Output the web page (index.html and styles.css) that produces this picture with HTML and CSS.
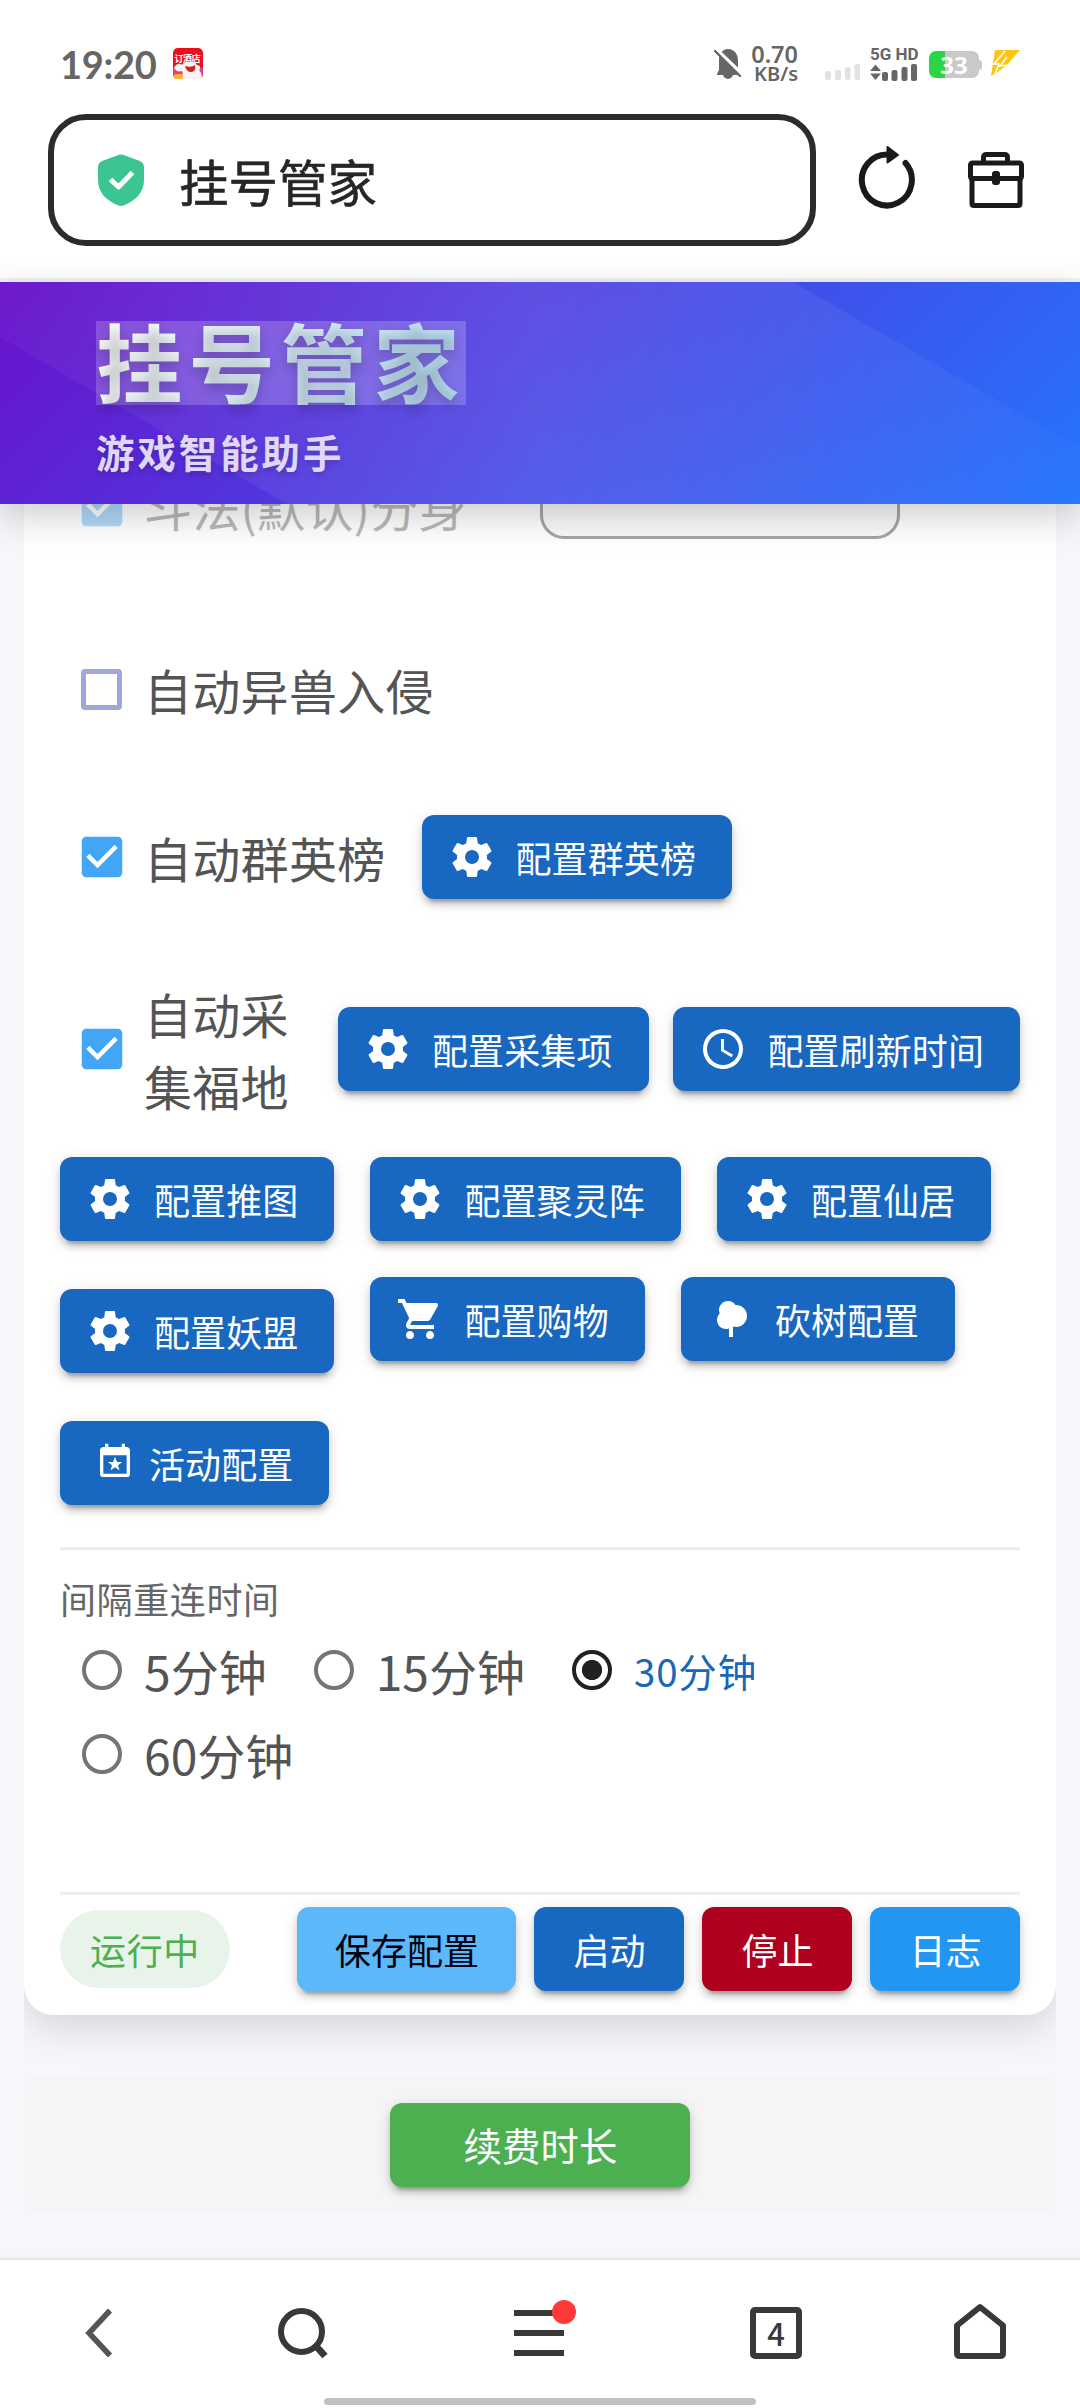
FILE: index.html
```html
<!DOCTYPE html>
<html lang="zh-CN">
<head>
<meta charset="utf-8">
<title>挂号管家</title>
<link rel="stylesheet" href="styles.css">
</head>
<body>
<svg class="defs" width="0" height="0">
  <symbol id="cog" viewBox="0 0 24 24"><path d="M12,15.5A3.5,3.5 0 0,1 8.5,12A3.5,3.5 0 0,1 12,8.5A3.5,3.5 0 0,1 15.5,12A3.5,3.5 0 0,1 12,15.5M19.43,12.97C19.47,12.65 19.5,12.33 19.5,12C19.5,11.67 19.47,11.34 19.43,11L21.54,9.37C21.73,9.22 21.78,8.95 21.66,8.73L19.66,5.27C19.54,5.05 19.27,4.96 19.05,5.05L16.56,6.05C16.04,5.66 15.5,5.32 14.87,5.07L14.5,2.42C14.46,2.18 14.25,2 14,2H10C9.75,2 9.54,2.18 9.5,2.42L9.13,5.07C8.5,5.32 7.96,5.66 7.44,6.05L4.95,5.05C4.73,4.96 4.46,5.05 4.34,5.27L2.34,8.73C2.21,8.95 2.27,9.22 2.46,9.37L4.57,11C4.53,11.34 4.5,11.67 4.5,12C4.5,12.33 4.53,12.65 4.57,12.97L2.46,14.63C2.27,14.78 2.21,15.05 2.34,15.27L4.34,18.73C4.46,18.95 4.73,19.03 4.95,18.95L7.44,17.94C7.96,18.34 8.5,18.68 9.13,18.93L9.5,21.58C9.54,21.82 9.75,22 10,22H14C14.25,22 14.46,21.82 14.5,21.58L14.87,18.93C15.5,18.67 16.04,18.34 16.56,17.94L19.05,18.95C19.27,19.03 19.54,18.95 19.66,18.73L21.66,15.27C21.78,15.05 21.73,14.78 21.54,14.63L19.43,12.97Z"/></symbol>
  <symbol id="clock" viewBox="0 0 24 24"><path d="M12,20A8,8 0 0,0 20,12A8,8 0 0,0 12,4A8,8 0 0,0 4,12A8,8 0 0,0 12,20M12,2A10,10 0 0,1 22,12A10,10 0 0,1 12,22C6.47,22 2,17.5 2,12A10,10 0 0,1 12,2M12.5,7V12.25L17,14.92L16.25,16.15L11,13V7H12.5Z"/></symbol>
  <symbol id="cart" viewBox="0 0 24 24"><path d="M17,18C15.89,18 15,18.89 15,20A2,2 0 0,0 17,22A2,2 0 0,0 19,20C19,18.89 18.1,18 17,18M1,2V4H3L6.6,11.59L5.24,14.04C5.09,14.32 5,14.65 5,15A2,2 0 0,0 7,17H19V15H7.42A0.25,0.25 0 0,1 7.17,14.75C7.17,14.7 7.18,14.66 7.2,14.63L8.1,13H15.55C16.3,13 16.96,12.58 17.3,11.97L20.88,5.5C20.95,5.34 21,5.17 21,5A1,1 0 0,0 20,4H5.21L4.27,2M7,18C5.89,18 5,18.89 5,20A2,2 0 0,0 7,22A2,2 0 0,0 9,20C9,18.89 8.1,18 7,18Z"/></symbol>
  <symbol id="tree" viewBox="0 0 24 24"><path d="M11,21V16.74C10.53,16.91 10.03,17 9.5,17C7,17 5,15 5,12.5C5,11.23 5.5,10.09 6.36,9.27C6.13,8.73 6,8.13 6,7.5C6,5 8,3 10.5,3C12.06,3 13.44,3.8 14.25,5C14.33,5 14.41,5 14.5,5A5.5,5.5 0 0,1 20,10.5A5.5,5.5 0 0,1 14.5,16C14,16 13.5,15.93 13,15.79V21H11Z"/></symbol>
  <symbol id="calendar-star" viewBox="0 0 24 24"><path d="M19,19H5V8H19M19,3H18V1H16V3H8V1H6V3H5C3.89,3 3,3.89 3,5V19A2,2 0 0,0 5,21H19A2,2 0 0,0 21,19V5C21,3.89 20.1,3 19,3Z"/><path d="M12,8.9L13.15,12H16.3L13.8,13.9L14.7,17.1L12,15.2L9.3,17.1L10.2,13.9L7.7,12H10.85Z"/></symbol>
  <symbol id="checked" viewBox="0 0 24 24"><path d="M10,17L5,12L6.41,10.58L10,14.17L17.59,6.58L19,8M19,3H5C3.89,3 3,3.89 3,5V19A2,2 0 0,0 5,21H19A2,2 0 0,0 21,19V5C21,3.89 20.1,3 19,3Z"/></symbol>
</svg>

<div class="screen">
  <div class="statusbar">
    <span class="time">19:20</span>
    <svg class="app-icon" width="30" height="31" viewBox="0 0 30 31">
      <rect width="30" height="31" rx="5" fill="#e8101c"/>
      <path d="M0 20H30V26a5 5 0 0 1-5 5H5a5 5 0 0 1-5-5Z" fill="#e0407c"/>
      <text x="1.5" y="14" class="app-text" textLength="26">订酒店</text>
      <path d="M1 20C3 15 7 15 9 17C11 13 21 12 24 17C28 17 28 21 26 22C29 25 29 28 29 31H8C10 27 10 25 9 23C5 24 3 23 1 20Z" fill="#fbf3f3"/>
      <path d="M12 18C16 19 20 19 22 17C23 22 21 24 18 24C15 24 13 22 12 18Z" fill="#c22a22"/>
      <rect x="1" y="26" width="9" height="5" rx="2" fill="#f9b233"/>
    </svg>
    <svg class="bell" width="28" height="32" viewBox="0 0 28 32">
      <path d="M3 26L5 22V12C5 6 8 1 14 1C20 1 24 6 24 12V27H3Z" fill="#666"/>
      <path d="M9 26A5 5 0 0 0 19 26Z" fill="#666"/>
      <path d="M0 -1L29 27" stroke="#fff" stroke-width="3.5"/>
      <path d="M1 3L26 28" stroke="#666" stroke-width="2.4" stroke-linecap="round"/>
    </svg>
    <div class="speed"><span class="rate">0.70</span><span class="unit">KB/s</span></div>
    <svg class="signal" width="36" height="18" viewBox="0 0 36 18" fill="#e2e2e2">
      <rect x="0" y="8" width="6" height="9" rx="2"/><rect x="10" y="7" width="6" height="10" rx="2"/><rect x="20" y="4" width="5.5" height="13" rx="2"/><rect x="29.500" y="1" width="5.5" height="16" rx="2"/>
    </svg>
    <div class="network">
      <span class="net-type">5G HD</span>
      <svg width="48" height="17" viewBox="0 0 48 17" fill="#666">
        <path d="M0 7L5.500 0.500L11 7ZM0 9.500H11L5.500 16Z"/>
        <rect x="12" y="8" width="6" height="9" rx="2"/><rect x="21.500" y="6" width="6" height="11" rx="2"/><rect x="31.500" y="3" width="6" height="14" rx="2"/><rect x="41" y="0" width="6" height="17" rx="2"/>
      </svg>
    </div>
    <div class="battery">33</div>
    <svg class="bolt" width="30" height="26" viewBox="0 0 30 26">
      <path d="M5 0H30L18 14H20L1 26L5 0Z" fill="#fcc612"/>
      <path d="M15 1L4 14M2 14H9L5 24M17 7L10 16L18 15L8 23" stroke="#fff" stroke-width="1.500" fill="none"/>
    </svg>
  </div>

  <div class="addressbar">
    <div class="address">
      <svg width="46" height="52" viewBox="0 0 46 52">
        <path d="M19 1.500Q23-.5 27 1.500L42 7Q46 9 46 13V26C46 39 37 47 26 51.300Q23 52.500 20 51.300C9 47 0 39 0 26V13Q0 9 4 7Z" fill="#3cc591"/>
        <path d="M12.500 25.500L20.500 33L34.500 18.500" stroke="#fff" stroke-width="5" fill="none" stroke-linejoin="round"/>
      </svg>
      <span>挂号管家</span>
    </div>
    <svg class="reload" width="60" height="66" viewBox="0 0 60 66">
      <path d="M30 8.500A25 25.500 0 1 0 47.500 17" fill="none" stroke="#1a1a1a" stroke-width="6" stroke-linecap="round"/>
      <path d="M29.500 1V16.500L40 9Z" fill="#1a1a1a" stroke="#1a1a1a" stroke-width="2" stroke-linejoin="round"/>
    </svg>
    <svg class="toolbox" width="58" height="58" viewBox="0 0 58 58" fill="none" stroke="#1a1a1a" stroke-width="5" stroke-linejoin="round">
      <path d="M16.500 11V6.500Q16.500 3.500 19.500 3.500H37.500Q40.500 3.500 40.500 6.500V11"/>
      <rect x="3.500" y="12" width="51" height="15.500" rx="2"/>
      <path d="M5 27V52.500Q5 54.500 7 54.500H51Q53 54.500 53 52.500V27"/>
      <rect x="25" y="20" width="8" height="14" rx="3" fill="#1a1a1a" stroke="none"/>
    </svg>
  </div>

  <header class="banner">
    <h1>挂号管家</h1>
    <p>游戏智能助手</p>
  </header>

  <main class="content">
    <div class="card-clip">
      <section class="card">
        <div class="row row-top">
          <svg class="check faded"><use href="#checked"/></svg>
          <span class="label disabled">斗法(默认)分身</span>
          <span class="field"></span>
        </div>
        <div class="row row-beast">
          <span class="box"></span>
          <span class="label">自动异兽入侵</span>
        </div>
        <div class="row row-rank">
          <svg class="check"><use href="#checked"/></svg>
          <span class="label">自动群英榜</span>
          <button class="btn"><svg><use href="#cog"/></svg>配置群英榜</button>
        </div>
        <div class="row row-gather">
          <svg class="check"><use href="#checked"/></svg>
          <span class="label wrap">自动采集福地</span>
          <button class="btn"><svg><use href="#cog"/></svg>配置采集项</button>
          <button class="btn"><svg><use href="#clock"/></svg>配置刷新时间</button>
        </div>

        <div class="configs">
          <div class="stack">
            <button class="btn"><svg><use href="#cog"/></svg>配置推图</button>
            <button class="btn"><svg><use href="#cog"/></svg>配置妖盟</button>
            <button class="btn event"><svg><use href="#calendar-star"/></svg>活动配置</button>
          </div>
          <div class="flow">
            <button class="btn"><svg><use href="#cog"/></svg>配置聚灵阵</button>
            <button class="btn"><svg><use href="#cog"/></svg>配置仙居</button>
            <button class="btn"><svg><use href="#cart"/></svg>配置购物</button>
            <button class="btn"><svg><use href="#tree"/></svg>砍树配置</button>
          </div>
        </div>

        <hr>
        <div class="caption">间隔重连时间</div>
        <div class="radios">
          <label><i></i>5分钟</label>
          <label><i></i>15分钟</label>
          <label class="on"><i></i>30分钟</label>
          <label><i></i>60分钟</label>
        </div>
        <hr class="last">
        <div class="actions">
          <span class="pill">运行中</span>
          <button class="btn save">保存配置</button>
          <button class="btn">启动</button>
          <button class="btn stop">停止</button>
          <button class="btn log">日志</button>
        </div>
      </section>
    </div>
    <div class="renew"><button class="btn">续费时长</button></div>
  </main>

  <nav class="navbar">
    <div class="tabs">
      <svg width="60" height="60" viewBox="0 0 60 60"><path d="M41 7.500L20 30L41 52.500" fill="none" stroke="#555" stroke-width="5.500"/></svg>
      <svg width="60" height="60" viewBox="0 0 60 60" fill="none" stroke="#383838"><circle cx="29.500" cy="28.500" r="20.500" stroke-width="6"/><path d="M43 42L53 53" stroke-width="7"/></svg>
      <svg width="80" height="70" viewBox="0 0 80 70"><path d="M15 15H65M15 35H65M15 55H65" stroke="#383838" stroke-width="6"/><circle cx="65" cy="14" r="12" fill="#ff3838"/></svg>
      <div class="count">4</div>
      <svg width="60" height="70" viewBox="0 0 60 70"><path d="M30 9L53 27.500V55Q53 58 50 58H10Q7 58 7 55V27.500Z" fill="none" stroke="#383838" stroke-width="6" stroke-linejoin="round"/></svg>
    </div>
    <div class="home-indicator"></div>
  </nav>
</div>
</body>
</html>
```
FILE: styles.css
```css
* { box-sizing: border-box; }
body { margin: 0; font-family: "Noto Sans CJK SC", sans-serif; }
.defs { position: absolute; }
.screen {
  width: 1080px;
  height: 2408px;
  display: flex;
  flex-direction: column;
  overflow: hidden;
  background: #f5f7fb;
}

/* system status bar */
.statusbar {
  height: 96px;
  flex: none;
  padding: 31px 60px 0;
  display: flex;
  align-items: center;
  background: #fff;
  color: #666;
}
.time {
  font: 700 38px/48px "Lato", sans-serif;
  width: 113px;
  letter-spacing: -0.3px;
}
.app-text { font-size: 9px; font-weight: 700; fill: #fff; }
.bell { margin-left: 511px; }
.speed {
  width: 50px;
  margin-left: 6px;
  display: flex;
  flex-direction: column;
  align-items: flex-end;
  font-family: "Noto Sans", sans-serif;
  font-weight: 600;
}
.rate { font-size: 23.500px; line-height: 20px; }
.unit { font-size: 20px; line-height: 19px; }
.signal { margin: 16px 0 0 27px; }
.network { margin-left: 9px; width: 48px; display: flex; flex-direction: column; gap: 2px; }
.network svg { display: block; }
.net-type { font: 700 17px/15px "Roboto", sans-serif; white-space: nowrap; }
.battery {
  position: relative;
  width: 50px;
  height: 27px;
  margin: 2px 0 0 11px;
  border-radius: 7px;
  background: linear-gradient(90deg, #2ad643 16px, #c9c9c9 16px);
  color: #fff;
  font: 700 24px/27px "Open Sans", sans-serif;
  text-align: center;
}
.battery::after {
  content: "";
  position: absolute;
  left: 50px;
  top: 9px;
  width: 3px;
  height: 10px;
  border-radius: 0 3px 3px 0;
  background: #c9c9c9;
}
.bolt { margin: -1px 0 0 11px; }

/* browser address bar */
.addressbar {
  height: 186px;
  flex: none;
  padding: 18px 0 32px 48px;
  display: flex;
  align-items: center;
  background: #fff;
  border-bottom: 4px solid #f1f2f6;
}
.address {
  width: 768px;
  height: 132px;
  border: 6px solid #2b2b2b;
  border-radius: 38px;
  padding-left: 44px;
  display: flex;
  align-items: center;
  gap: 35px;
  color: #262626;
  font-size: 49.500px;
  -webkit-text-stroke: .6px #262626;
}
.reload { margin: 0 0 2px 42px; }
.toolbox { margin-left: 49px; }

/* app banner */
.banner {
  position: relative;
  z-index: 1;
  height: 222px;
  flex: none;
  padding: 39px 96px 0;
  background: linear-gradient(135deg, #6a11cb 0%, #2575fc 100%);
  box-shadow: 0 12px 36px rgba(0, 0, 0, .2);
}
.banner::before {
  content: "";
  position: absolute;
  inset: 0;
  background: linear-gradient(90deg, rgba(255, 255, 255, .03), rgba(255, 255, 255, .1) 50%, rgba(255, 255, 255, .02));
  clip-path: polygon(0 0, 793px 0, 1080px 166px, 1080px 222px, 287px 222px, 0 55px);
}
.banner h1 {
  position: relative;
  margin: 0;
  width: 370px;
  height: 84px;
  font-size: 86.400px;
  line-height: 78px;
  letter-spacing: 6px;
  font-weight: 700;
  white-space: nowrap;
  color: transparent;
  background:
    linear-gradient(100deg, #fff, #b5dcf4) text,
    rgba(255, 255, 255, .2);
  text-shadow: 0 6px 12px rgba(0, 0, 0, .2);
}
.banner p {
  position: relative;
  margin: 22px 0 0;
  font-size: 38.400px;
  line-height: 48px;
  letter-spacing: 3px;
  font-weight: 700;
  color: #dfd6f8;
  text-shadow: 0 3px 6px rgba(0, 0, 0, .2);
}

/* page */
.content { flex: 1; min-height: 0; }
.card-clip {
  margin: 0 24px;
  height: 1572px;
  overflow: hidden;
}
.card {
  height: 1511px;
  display: flow-root;
  padding: 0 36px;
  background: #fff;
  border-radius: 0 0 30px 30px;
  box-shadow: 0 12px 42px rgba(0, 0, 0, .14);
}
.row { height: 84px; display: flex; align-items: center; }
.row-top { height: 66px; margin-top: -31px; }
.row-beast { margin-top: 108px; }
.row-rank { margin-top: 84px; }
.row-gather { height: 144px; margin-top: 78px; }
.check { width: 54px; height: 54px; margin: 0 15px; flex: none; fill: #42a5f5; }
.faded { opacity: .42; }
.box {
  width: 41px;
  height: 41px;
  margin: 0 22px 0 21px;
  border: 5px solid #9fa8da;
  border-radius: 4px;
}
.label { font-size: 48px; line-height: 72px; letter-spacing: .3px; color: #545454; white-space: nowrap; }
.disabled { color: #b9b9b9; }
.wrap { width: 156px; padding-right: 10px; white-space: normal; }
.field {
  width: 360px;
  height: 66px;
  margin-left: auto;
  margin-right: 120px;
  border: 3px solid #a6a6a6;
  border-top: 0;
  border-radius: 0 0 24px 24px;
  background: rgba(0, 0, 0, .02);
}
.btn {
  height: 84px;
  flex: none;
  margin: 0;
  padding: 0 36px 0 26px;
  display: flex;
  align-items: center;
  justify-content: center;
  border: 0;
  border-radius: 12px;
  background: #1867c0;
  color: #fff;
  font: 400 36px "Noto Sans CJK SC", sans-serif;
  letter-spacing: .1px;
  white-space: nowrap;
  box-shadow: 0 9px 3px -6px rgba(0, 0, 0, .2), 0 6px 6px rgba(0, 0, 0, .14), 0 3px 15px rgba(0, 0, 0, .12);
}
.btn svg { width: 48px; height: 48px; margin-right: 20px; fill: currentColor; }
.row-rank .btn { margin-left: 36px; }
.wrap + .btn { margin-left: 38px; }
.row-gather .btn + .btn { margin-left: auto; }

.configs { display: flex; gap: 36px; margin-top: 36px; }
.stack { display: flex; flex-direction: column; align-items: flex-start; gap: 48px; }
.flow { display: flex; flex-wrap: wrap; align-content: flex-start; gap: 36px; }
.event { padding: 0 36px 0 35px; }
.event svg { width: 40px; height: 40px; margin: -3px 14px 0 0; }

hr { height: 3px; margin: 42px 0 24px; border: 0; background: #eee; }
.caption { font-size: 36px; line-height: 48px; letter-spacing: .6px; color: #666; }
.radios { display: flex; flex-wrap: wrap; column-gap: 25px; margin-top: 6px; }
.radios label {
  height: 84px;
  display: flex;
  align-items: center;
  font-size: 48px;
  color: #545454;
}
.radios i {
  width: 40px;
  height: 40px;
  margin: 0 22px;
  border: 4px solid #757575;
  border-radius: 50%;
}
.radios .on { font-size: 38.400px; letter-spacing: .9px; color: #1867b8; margin-right: 100px; }
.on i { border-color: #212121; background: radial-gradient(circle, #212121 9.700px, transparent 10.500px); }
hr.last { margin: 96px 0 12px; }
.actions { display: flex; align-items: center; gap: 18px; }
.pill {
  height: 78px;
  width: 170px;
  margin-right: auto;
  border-radius: 39px;
  background: #e8f4ea;
  color: #4caf50;
  font-size: 36px;
  line-height: 78px;
  letter-spacing: .6px;
  text-align: center;
}
.actions .btn { width: 150px; padding: 0 0 0 1px; }
.actions .save { width: 219px; background: #5cb8f8; color: #000010; }
.actions .stop { background: #b00020; }
.actions .log { background: #2196f3; }
.renew {
  height: 136px;
  margin: 0 24px;
  border-radius: 12px;
  background: #f5f5f5;
  display: flex;
  align-items: center;
  justify-content: center;
}
.renew .btn { width: 300px; padding: 0 0 2px 1px; background: #4caf50; font-size: 38.400px; margin-top: 2px; }

/* browser navigation */
.navbar {
  height: 150px;
  flex: none;
  border-top: 2px solid #e4e5e9;
  background: #fff;
  box-shadow: 0 0 6px rgba(0, 0, 0, .04);
}
.tabs {
  height: 138px;
  padding-top: 8px;
  display: grid;
  grid-template-columns: 198px 208px 266px 208px 200px;
  align-items: center;
  justify-items: center;
}
.count {
  width: 52px;
  height: 52px;
  border: 6px solid #383838;
  border-radius: 5px;
  color: #383838;
  font: 500 31px/40px "Noto Sans CJK SC", sans-serif;
  text-align: center;
}
.home-indicator { width: 432px; height: 7px; margin: 0 auto; border-radius: 4px; background: #c1c1c1; }
```
